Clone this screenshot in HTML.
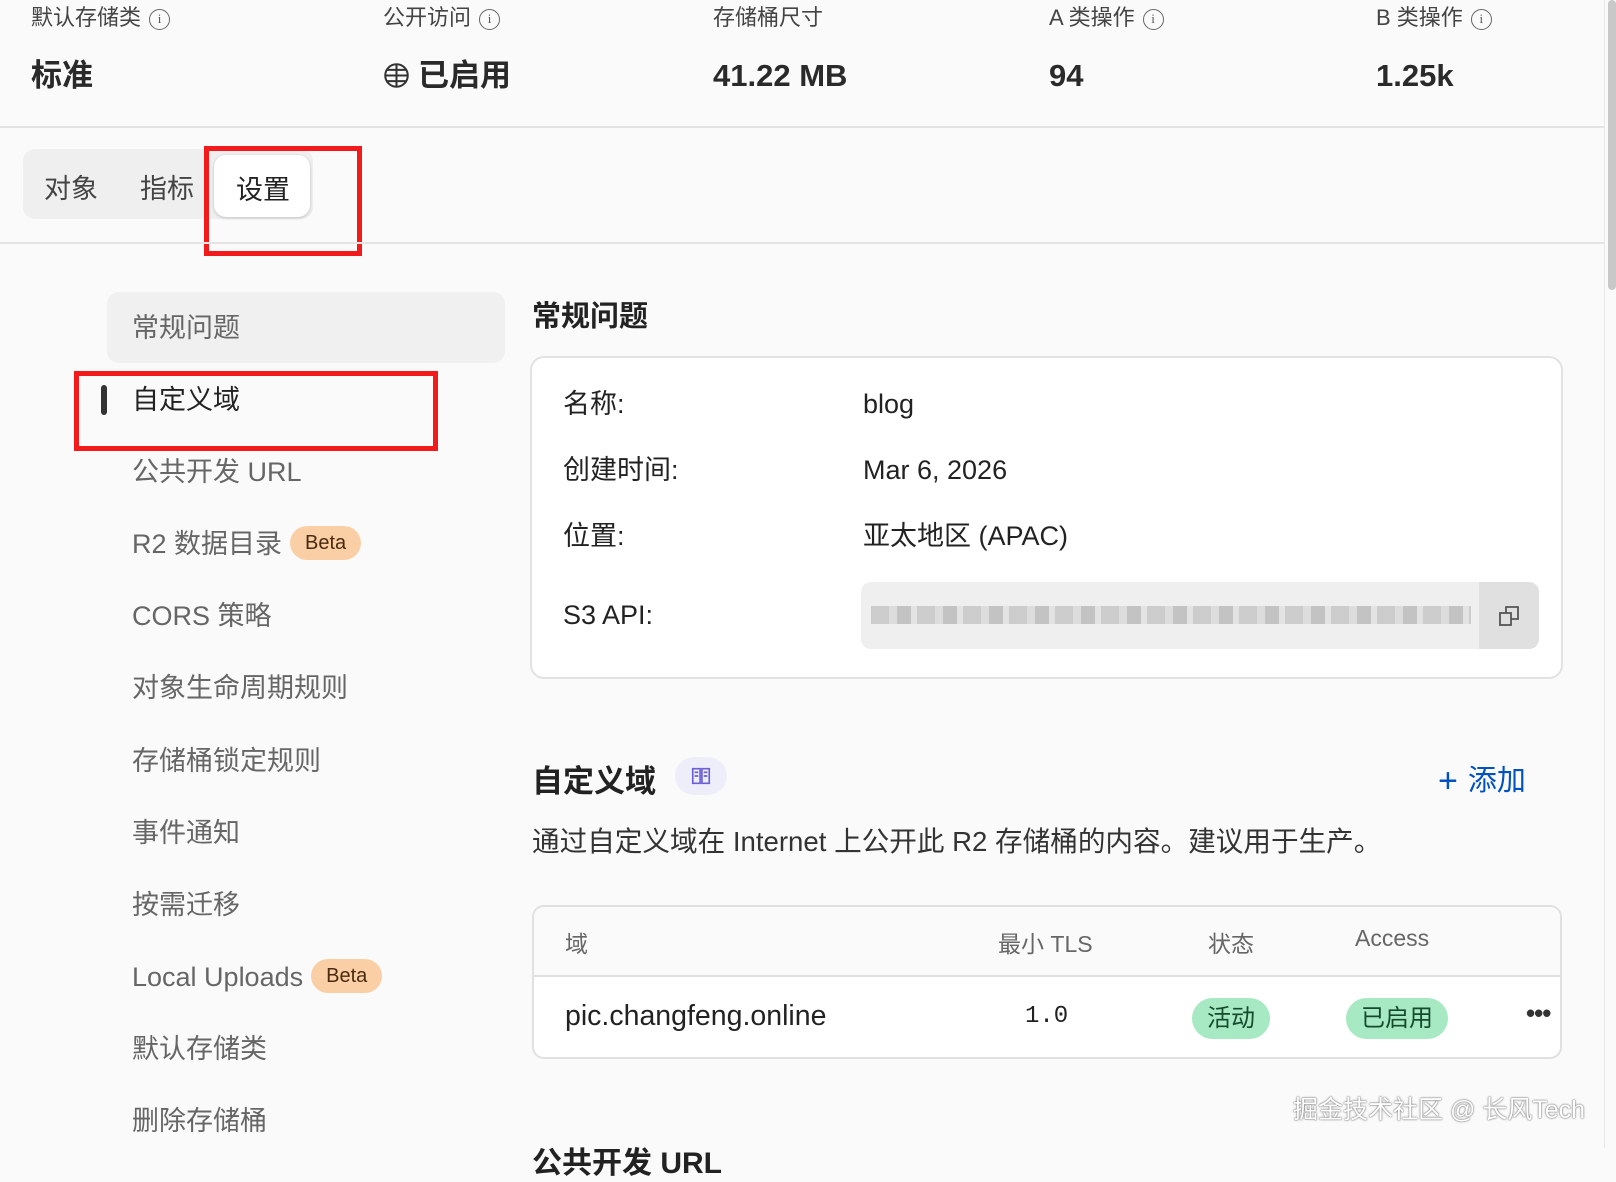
<!DOCTYPE html>
<html><head><meta charset="utf-8"><style>
*{box-sizing:border-box;margin:0;padding:0}
body{width:1616px;height:1148px;background:#fafafa;font-family:"Liberation Sans","Noto Sans CJK SC",sans-serif;color:#222;position:relative;overflow:hidden}
.a{position:absolute;white-space:nowrap}
.lbl{font-size:22px;color:#444;top:4px;line-height:28px}
.val{font-size:31px;font-weight:bold;color:#2a2a2a;top:56px;line-height:40px}
.i{display:inline-block;width:21px;height:21px;border:1.5px solid #666;border-radius:50%;font-size:13px;text-align:center;line-height:18px;vertical-align:2px;margin-left:8px;color:#555;font-family:"Liberation Serif",serif}
.side{font-size:27px;color:#666;left:132px;line-height:36px}
.rl{font-size:27px;left:563px;color:#222;line-height:36px}
.rv{font-size:27px;left:863px;color:#222;line-height:36px}
.beta{display:inline-block;background:#fbcfa5;color:#4a2a10;font-size:20px;border-radius:18px;padding:0 15px;line-height:34px;vertical-align:4px;margin-left:8px}
.pill{position:absolute;background:#a6e9c2;color:#154b2d;font-size:24px;border-radius:21px;text-align:center;line-height:41px;height:41px}
</style></head><body>
<div class="a lbl" style="left:31px">默认存储类<span class="i">i</span></div>
<div class="a lbl" style="left:383px">公开访问<span class="i">i</span></div>
<div class="a lbl" style="left:713px">存储桶尺寸</div>
<div class="a lbl" style="left:1049px">A 类操作<span class="i">i</span></div>
<div class="a lbl" style="left:1376px">B 类操作<span class="i">i</span></div>
<div class="a val" style="left:31px">标准</div>
<div class="a val" style="left:383px"><svg width="27" height="27" viewBox="0 0 24 24" style="vertical-align:-3px;margin-right:8px" fill="none" stroke="#333" stroke-width="1.8"><circle cx="12" cy="12" r="10"/><path d="M2 12h20M12 2v20M4 7h16M4 17h16"/></svg>已启用</div>
<div class="a val" style="left:713px">41.22 MB</div>
<div class="a val" style="left:1049px">94</div>
<div class="a val" style="left:1376px">1.25k</div>
<div class="a" style="left:0;top:126px;width:1604px;height:2px;background:#e4e4e4"></div>
<div class="a" style="left:1608px;top:0;width:8px;height:290px;background:#c8c8c8;border-radius:4px"></div>
<div class="a" style="left:1604px;top:0;width:1px;height:1148px;background:#e8e8e8"></div>

<div class="a" style="left:23px;top:149px;width:290px;height:70px;background:#efefef;border-radius:12px"></div>
<div class="a" style="left:44px;top:167px;font-size:27px;color:#444">对象</div>
<div class="a" style="left:140px;top:167px;font-size:27px;color:#444">指标</div>
<div class="a" style="left:214px;top:155px;width:96px;height:62px;background:#fff;border-radius:12px;box-shadow:0 1px 3px rgba(0,0,0,.2)"></div>
<div class="a" style="left:236px;top:168px;font-size:27px;color:#222">设置</div>
<div class="a" style="left:204px;top:146px;width:158px;height:110px;border:5px solid #f21a1a"></div>
<div class="a" style="left:0;top:242px;width:1604px;height:2px;background:#e4e4e4"></div>

<div class="a" style="left:107px;top:292px;width:398px;height:71px;background:#f0f0f0;border-radius:12px"></div>
<div class="a side" style="top:310px">常规问题</div>
<div class="a" style="left:101px;top:385px;width:6px;height:30px;background:#333;border-radius:3px"></div>
<div class="a side" style="top:382px;color:#222">自定义域</div>
<div class="a" style="left:74px;top:371px;width:364px;height:80px;border:5px solid #f21a1a"></div>
<div class="a side" style="top:454px">公共开发 URL</div>
<div class="a side" style="top:526px">R2 数据目录<span class="beta">Beta</span></div>
<div class="a side" style="top:598px">CORS 策略</div>
<div class="a side" style="top:670px">对象生命周期规则</div>
<div class="a side" style="top:743px">存储桶锁定规则</div>
<div class="a side" style="top:815px">事件通知</div>
<div class="a side" style="top:887px">按需迁移</div>
<div class="a side" style="top:959px">Local Uploads<span class="beta">Beta</span></div>
<div class="a side" style="top:1031px">默认存储类</div>
<div class="a side" style="top:1103px">删除存储桶</div>

<div class="a" style="left:532px;top:293px;font-size:29px;font-weight:bold;color:#222">常规问题</div>
<div class="a" style="left:530px;top:356px;width:1033px;height:323px;background:#fff;border:2px solid #e2e2e2;border-radius:14px"></div>
<div class="a rl" style="top:386px">名称:</div><div class="a rv" style="top:386px">blog</div>
<div class="a rl" style="top:452px">创建时间:</div><div class="a rv" style="top:452px">Mar 6, 2026</div>
<div class="a rl" style="top:518px">位置:</div><div class="a rv" style="top:518px">亚太地区 (APAC)</div>
<div class="a rl" style="top:597px">S3 API:</div>
<div class="a" style="left:861px;top:582px;width:678px;height:67px;background:#efefef;border-radius:10px;overflow:hidden">
<div style="position:absolute;left:10px;top:24px;width:600px;height:18px;background:repeating-linear-gradient(90deg,#c4c4c4 0 18px,#d8d8d8 18px 26px,#b8b8b8 26px 40px,#e0e0e0 40px 46px);opacity:.8"></div>
<div style="position:absolute;right:0;top:0;width:60px;height:67px;background:#e0e0e0"></div>
<svg style="position:absolute;right:18px;top:22px" width="24" height="24" viewBox="0 0 24 24" fill="none" stroke="#555" stroke-width="1.8"><rect x="3" y="9" width="11" height="12"/><path d="M9 9V3h12v12h-7"/></svg>
</div>

<div class="a" style="left:532px;top:756px;font-size:31px;font-weight:bold;color:#222">自定义域</div>
<div class="a" style="left:675px;top:757px;width:52px;height:38px;background:#eeeefb;border-radius:19px"></div>
<svg class="a" style="left:690px;top:765px" width="22" height="22" viewBox="0 0 24 24" fill="none" stroke="#6b5fd6" stroke-width="1.8"><path d="M3 4h8v16H3zM13 4h8v16h-8zM5 8h4M5 12h4M15 8h4M15 12h4"/></svg>
<div class="a" style="left:1438px;top:757px;font-size:29px;color:#0051c3"><span style="font-size:34px;vertical-align:-2px;margin-right:10px">+</span>添加</div>
<div class="a" style="left:532px;top:819px;font-size:27.6px;color:#333">通过自定义域在 Internet 上公开此 R2 存储桶的内容。建议用于生产。</div>

<div class="a" style="left:532px;top:905px;width:1030px;height:154px;background:#fff;border:2px solid #e0e0e0;border-radius:12px;overflow:hidden">
<div style="position:absolute;left:0;top:0;width:100%;height:70px;background:#fafafa;border-bottom:2px solid #e0e0e0"></div>
</div>
<div class="a" style="left:565px;top:925px;font-size:23px;color:#666">域</div>
<div class="a" style="left:998px;top:925px;font-size:23px;color:#666">最小 TLS</div>
<div class="a" style="left:1208px;top:925px;font-size:23px;color:#666">状态</div>
<div class="a" style="left:1355px;top:925px;font-size:23px;color:#666">Access</div>
<div class="a" style="left:565px;top:1000px;font-size:28.5px;color:#222">pic.changfeng.online</div>
<div class="a" style="left:1025px;top:1003px;font-size:24px;font-family:'Liberation Mono',monospace;color:#222">1.0</div>
<div class="pill" style="left:1192px;top:998px;width:78px">活动</div>
<div class="pill" style="left:1346px;top:998px;width:102px">已启用</div>
<div class="a" style="left:1526px;top:998px;font-size:26px;font-weight:bold;color:#333;letter-spacing:-1px">•••</div>
<div class="a" style="left:1293px;top:1090px;font-size:25px;color:#fff;text-shadow:0 0 2px #777,0 0 1px #555">掘金技术社区 @ 长风Tech</div>
<div class="a" style="left:532px;top:1138px;font-size:30px;font-weight:bold;color:#222">公共开发 URL</div>
</body></html>
